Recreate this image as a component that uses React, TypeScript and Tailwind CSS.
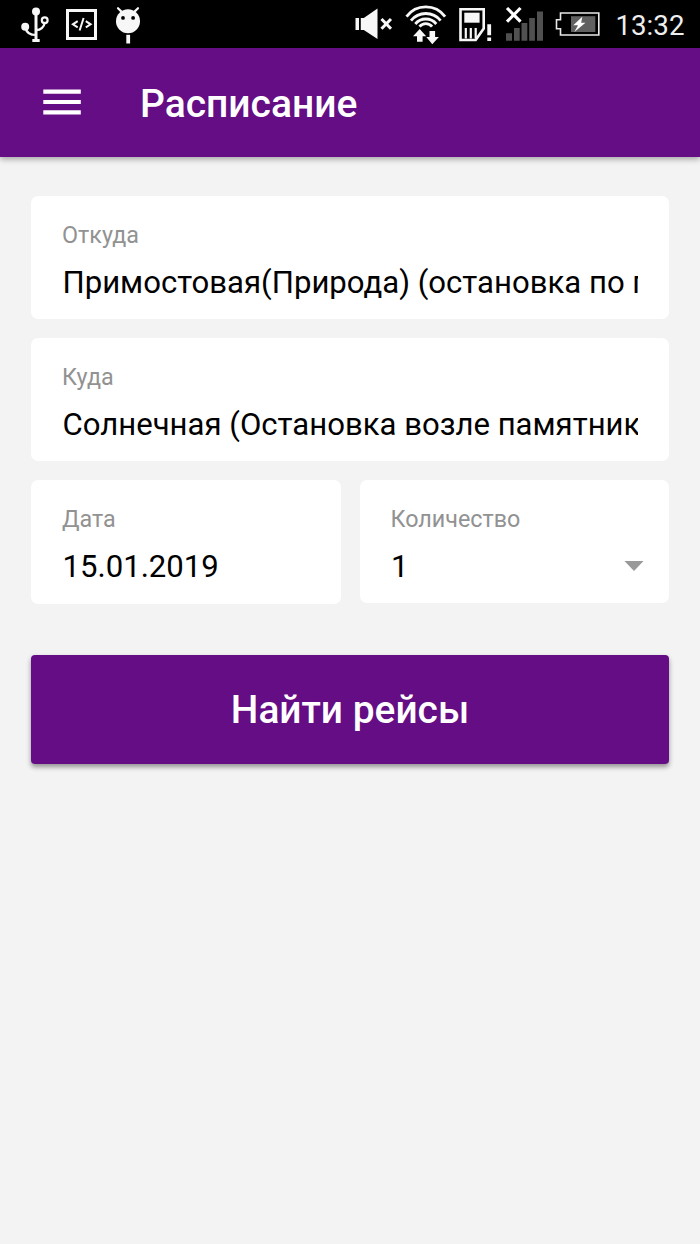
import type { ReactNode } from "react";

function Icon({ box, className, children }: { box: string; className: string; children: ReactNode }) {
  return (
    <svg viewBox={box} className={className} fill="none" aria-hidden="true">
      {children}
    </svg>
  );
}

function StatusBar() {
  return (
    <div className="flex h-12 items-stretch bg-black pl-5 text-white">
      <Icon box="20 0 30 48" className="h-12 w-[30px] shrink-0">
        <path d="M36 10v31" stroke="#f7f7f7" strokeWidth="3" />
        <circle cx="36" cy="11.5" r="4" fill="#f7f7f7" />
        <circle cx="25.2" cy="26.7" r="4" fill="#f7f7f7" />
        <circle cx="44.7" cy="20.3" r="2.9" stroke="#f7f7f7" strokeWidth="2.2" />
        <path d="M25.5 28c1 5 4 7 10.5 7M45 22c-1 5-3 8-9 8.2" stroke="#f7f7f7" strokeWidth="2.2" />
        <path d="M32.3 39h7.4v3h-7.4z" fill="#f7f7f7" />
      </Icon>
      <Icon box="66 0 31 48" className="ml-4 h-12 w-[31px] shrink-0">
        <rect x="67.5" y="10.5" width="28" height="28" stroke="#f7f7f7" strokeWidth="3" />
        <path d="M77.7 21.2l-4.8 3.1 4.8 3.1M85.8 21.2l4.8 3.1-4.8 3.1M83.6 18l-4 12.5" stroke="#f7f7f7" strokeWidth="2" />
      </Icon>
      <Icon box="114 0 28 48" className="ml-[17px] h-12 w-7 shrink-0">
        <path d="M118 8.2l4.2 4.2M138 8.2l-4.2 4.2" stroke="#f7f7f7" strokeWidth="2.2" strokeLinecap="round" />
        <circle cx="128" cy="21.3" r="12" fill="#f7f7f7" />
        <circle cx="123" cy="17.9" r="1.9" fill="#000" />
        <circle cx="133.1" cy="17.9" r="1.9" fill="#000" />
        <path d="M126.3 34.8h3.8v8.7h-3.8z" fill="#f7f7f7" />
      </Icon>
      <Icon box="355 0 38 48" className="ml-[213px] h-12 w-[38px] shrink-0">
        <path d="M355.5 18h3.5v12h-3.5zM360.8 18h3L377.5 8.5V39L363.8 30h-3z" fill="#f7f7f7" />
        <path d="M381.5 19l9.5 9.8M391 19l-9.5 9.8" stroke="#f7f7f7" strokeWidth="3" />
      </Icon>
      <Icon box="405 0 42 48" className="ml-3 h-12 w-[42px] shrink-0">
        <path d="M406.5 16.7a24 24 0 0 1 38.6 0M411 20.6a19 19 0 0 1 29.6 0M415.3 24a13.5 13.5 0 0 1 21 0M419.5 26.6a8 8 0 0 1 12.6 0" stroke="#f7f7f7" strokeWidth="2.8" />
        <path d="M419.7 29l6.5 7.2h-3.6v5.5h-5.6v-5.5h-4z" fill="#f7f7f7" />
        <path d="M432.3 44.3l-6-7.3h3.2v-6h5.6v6h3.8z" fill="#f7f7f7" />
      </Icon>
      <Icon box="458 0 34 48" className="ml-[11px] h-12 w-[34px] shrink-0">
        <path d="M460.5 9.2h23.2v19.3l-8 11.5h-15.2z" stroke="#f7f7f7" strokeWidth="2.6" />
        <path d="M464.3 12.7h15.3v10h-15.3z" fill="#f7f7f7" />
        <path d="M465.8 28v10.5M470.8 28v10.5M475.7 28v10.5" stroke="#f7f7f7" strokeWidth="2.2" />
        <path d="M487.3 24.3h3.8v11h-3.8zM487.3 37.5h3.8v3.5h-3.8z" fill="#f7f7f7" />
      </Icon>
      <Icon box="505 0 39 48" className="ml-[13px] h-12 w-[39px] shrink-0">
        <path d="M506 33.3h6v7.5h-6zM514 28h5.7v12.8H514zM521.5 23h5.8v17.8h-5.8zM529.2 18h5.7v22.8h-5.7zM537 11.5h6v29.3h-6z" fill="#505050" />
        <path d="M507 8l13.5 13.7M520.5 8L507 21.7" stroke="#fff" strokeWidth="3.2" />
      </Icon>
      <Icon box="555 0 46 48" className="ml-[11px] h-12 w-[46px] shrink-0">
        <path d="M560.5 13h38.3v22h-38.3v-6.2h-4v-9h4z" stroke="#e8e8e8" strokeWidth="1.6" />
        <path d="M571 16.2h24.3V32H571z" fill="#606060" />
        <path d="M582.3 16.8L573.3 25.3h4.8l-3.8 6.7L585.5 22.8h-4.3z" fill="#fff" />
      </Icon>
      <span className="ml-[14.5px] pt-0.5 text-[27.7px] leading-[48px] whitespace-nowrap text-[#eeeeee]">13:32</span>
    </div>
  );
}

function Field({ label, value, className = "h-[123px]", dropdown = false }: { label: string; value: string; className?: string; dropdown?: boolean }) {
  return (
    <div className={`min-w-0 rounded-[7px] bg-white pt-[25px] pl-[31.5px] pr-[31px] ${className}`}>
      <div className="-ml-[0.5px] text-[23.33px] leading-7 text-[#929292]">{label}</div>
      <div className="mt-4 flex items-center">
        <div className="min-w-0 flex-1 overflow-hidden text-[31.11px] leading-9 whitespace-nowrap text-black">{value}</div>
        {dropdown && (
          <svg viewBox="0 0 20 10" className="-mt-0.5 -mr-1.5 h-2.5 w-5 shrink-0" aria-hidden="true">
            <path d="M.5 0h19L10 10z" fill="#999" />
          </svg>
        )}
      </div>
    </div>
  );
}

export default function App() {
  return (
    <div className="min-h-[1244px] w-full overflow-hidden bg-[#f3f3f3] font-['Roboto',sans-serif]">
      <StatusBar />
      <header className="flex h-[109px] items-center bg-[#640d84] pl-[43px] text-white shadow-[0_2px_6px_rgba(0,0,0,0.35)]">
        <button aria-label="Меню" className="-mt-px w-[38px]">
          <svg viewBox="0 0 38 26" className="h-[26px] w-[38px]" aria-hidden="true">
            <path d="M.3.5h37.5v4.2H.3zM.3 10.9h37.5v4.2H.3zM.3 21.2h37.5v4.2H.3z" fill="#fff" />
          </svg>
        </button>
        <h1 className="mt-1 ml-[59px] text-[39px] leading-none font-medium">Расписание</h1>
      </header>
      <main className="px-[31px] pt-[39px]">
        <div className="flex flex-col gap-[19px]">
          <Field label="Откуда" value="Примостовая(Природа) (остановка по пути)" />
          <Field label="Куда" value="Солнечная (Остановка возле памятника)" />
          <div className="grid grid-cols-2 items-start gap-[19px]">
            <Field label="Дата" value="15.01.2019" className="h-[124px]" />
            <Field label="Количество" value="1" dropdown />
          </div>
        </div>
        <button className="mt-[51px] flex h-[108.5px] w-full items-center justify-center rounded-[4px] bg-[#640d84] pt-0.5 text-[38.89px] font-medium text-white shadow-[0_3px_5px_rgba(0,0,0,0.4)]">
          Найти рейсы
        </button>
      </main>
    </div>
  );
}
